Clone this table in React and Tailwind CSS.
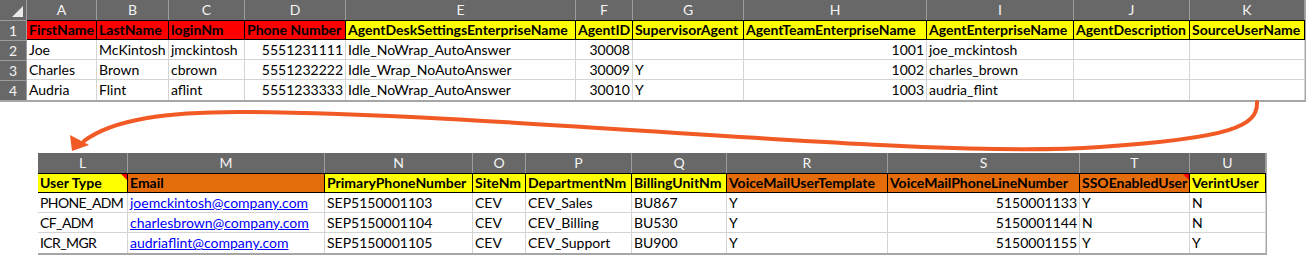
import React from 'react';

const FONT = { fontFamily: 'Lato, "Open Sans", sans-serif' };

const topCols = [
  { l: 'A', w: 70, h: 'FirstName', c: 'red' },
  { l: 'B', w: 72, h: 'LastName', c: 'red' },
  { l: 'C', w: 76, h: 'loginNm', c: 'red' },
  { l: 'D', w: 101, h: 'Phone Number', c: 'red', num: true },
  { l: 'E', w: 230, h: 'AgentDeskSettingsEnterpriseName', c: 'yellow' },
  { l: 'F', w: 57, h: 'AgentID', c: 'yellow', num: true },
  { l: 'G', w: 111, h: 'SupervisorAgent', c: 'yellow' },
  { l: 'H', w: 183, h: 'AgentTeamEnterpriseName', c: 'yellow', num: true },
  { l: 'I', w: 147, h: 'AgentEnterpriseName', c: 'yellow' },
  { l: 'J', w: 116, h: 'AgentDescription', c: 'yellow' },
  { l: 'K', w: 115, h: 'SourceUserName', c: 'yellow' },
];

const topRows = [
  ['Joe', 'McKintosh', 'jmckintosh', '5551231111', 'Idle_NoWrap_AutoAnswer', '30008', '', '1001', 'joe_mckintosh', '', ''],
  ['Charles', 'Brown', 'cbrown', '5551232222', 'Idle_Wrap_NoAutoAnswer', '30009', 'Y', '1002', 'charles_brown', '', ''],
  ['Audria', 'Flint', 'aflint', '5551233333', 'Idle_NoWrap_AutoAnswer', '30010', 'Y', '1003', 'audria_flint', '', ''],
];

const bottomCols = [
  { l: 'L', w: 90, h: 'User Type', c: 'yellow', note: true, tight: true },
  { l: 'M', w: 197, h: 'Email', c: 'orange', link: true },
  { l: 'N', w: 148, h: 'PrimaryPhoneNumber', c: 'yellow' },
  { l: 'O', w: 53, h: 'SiteNm', c: 'yellow' },
  { l: 'P', w: 106, h: 'DepartmentNm', c: 'yellow' },
  { l: 'Q', w: 95, h: 'BillingUnitNm', c: 'yellow' },
  { l: 'R', w: 161, h: 'VoiceMailUserTemplate', c: 'orange' },
  { l: 'S', w: 192, h: 'VoiceMailPhoneLineNumber', c: 'orange', num: true },
  { l: 'T', w: 110, h: 'SSOEnabledUser', c: 'orange', note: true },
  { l: 'U', w: 76, h: 'VerintUser', c: 'yellow' },
];

const bottomRows = [
  ['PHONE_ADM', 'joemckintosh@company.com', 'SEP5150001103', 'CEV', 'CEV_Sales', 'BU867', 'Y', '5150001133', 'Y', 'N'],
  ['CF_ADM', 'charlesbrown@company.com', 'SEP5150001104', 'CEV', 'CEV_Billing', 'BU530', 'Y', '5150001144', 'N', 'N'],
  ['ICR_MGR', 'audriaflint@company.com', 'SEP5150001105', 'CEV', 'CEV_Support', 'BU900', 'Y', '5150001155', 'Y', 'Y'],
];

const fills = {
  red: 'bg-[#ff0000]',
  yellow: 'bg-[#ffff00]',
  orange: 'bg-[#e46c0a]',
};

function Sheet({ cols, rows, rowNums, startRow }) {
  const template = (rowNums ? '27px ' : '') + cols.map((c) => c.w + 'px').join(' ');
  return (
    <div
      className="grid border-b-2 border-r border-[#a6a6a6] text-[14px] leading-none text-black"
      style={{ gridTemplateColumns: template, width: 'max-content' }}
    >
      {/* column letters */}
      {rowNums && (
        <div className="relative h-5 border-r border-[#9c9c9c] bg-[#686868]">
          <div className="absolute bottom-[3px] right-[3px] h-0 w-0 border-b-[11px] border-l-[11px] border-b-[#e8e8e8] border-l-transparent" />
        </div>
      )}
      {cols.map((c) => (
        <div
          key={c.l}
          className="flex h-5 items-center justify-center border-r border-[#9c9c9c] bg-[#686868] text-[#f4f4f4]"
        >
          {c.l}
        </div>
      ))}

      {/* field titles */}
      {rowNums && (
        <div className="flex h-5 items-center justify-center border-r border-t border-[#9c9c9c] bg-[#686868] text-[#f4f4f4]">
          {startRow}
        </div>
      )}
      {cols.map((c) => (
        <div
          key={c.h}
          className={`relative flex h-5 items-center overflow-hidden whitespace-nowrap border-b border-r border-t border-black pl-[2px] font-bold ${fills[c.c]}`}
        >
          {c.h}
          {c.note && (
            <div className="absolute right-0 top-0 h-0 w-0 border-l-[6px] border-t-[6px] border-l-transparent border-t-[#ff0000]" />
          )}
        </div>
      ))}

      {/* data */}
      {rows.map((r, ri) => (
        <React.Fragment key={ri}>
          {rowNums && (
            <div className="flex h-5 items-center justify-center border-r border-t border-[#9c9c9c] bg-[#686868] text-[#f4f4f4]">
              {startRow + ri + 1}
            </div>
          )}
          {r.map((v, ci) => {
            const col = cols[ci];
            return (
              <div
                key={ci}
                className={`flex h-5 items-center overflow-hidden whitespace-nowrap border-b border-r border-[#d4d4d4] ${
                  col.num ? 'justify-end pr-[2px]' : 'pl-[2px]'
                } ${col.tight ? 'tracking-[-0.6px]' : ''} ${ri === rows.length - 1 ? 'border-b-0' : ''}`}
              >
                {col.link ? <span className="text-[#0000ff] underline">{v}</span> : v}
              </div>
            );
          })}
        </React.Fragment>
      ))}
    </div>
  );
}

function Arrow() {
  return (
    <svg className="pointer-events-none absolute left-0 top-0" width="1307" height="255" viewBox="0 0 1307 255">
      <path
        d="M1257 102 C1258 126 1232 138 1100 147 C920 160 520 114 250 112 C165 111 112 120 84 141"
        fill="none"
        stroke="#f15a24"
        strokeWidth="4"
        strokeLinecap="round"
      />
      <polygon points="72,151 70,135 89,145" fill="#f15a24" />
    </svg>
  );
}

export default function App() {
  return (
    <div className="relative h-[255px] w-[1307px] overflow-hidden bg-white" style={FONT}>
      <div className="flex flex-col">
        <Sheet cols={topCols} rows={topRows} rowNums startRow={1} />
        <div className="ml-[38px] mt-[51px]">
          <Sheet cols={bottomCols} rows={bottomRows} />
        </div>
      </div>
      <Arrow />
    </div>
  );
}
